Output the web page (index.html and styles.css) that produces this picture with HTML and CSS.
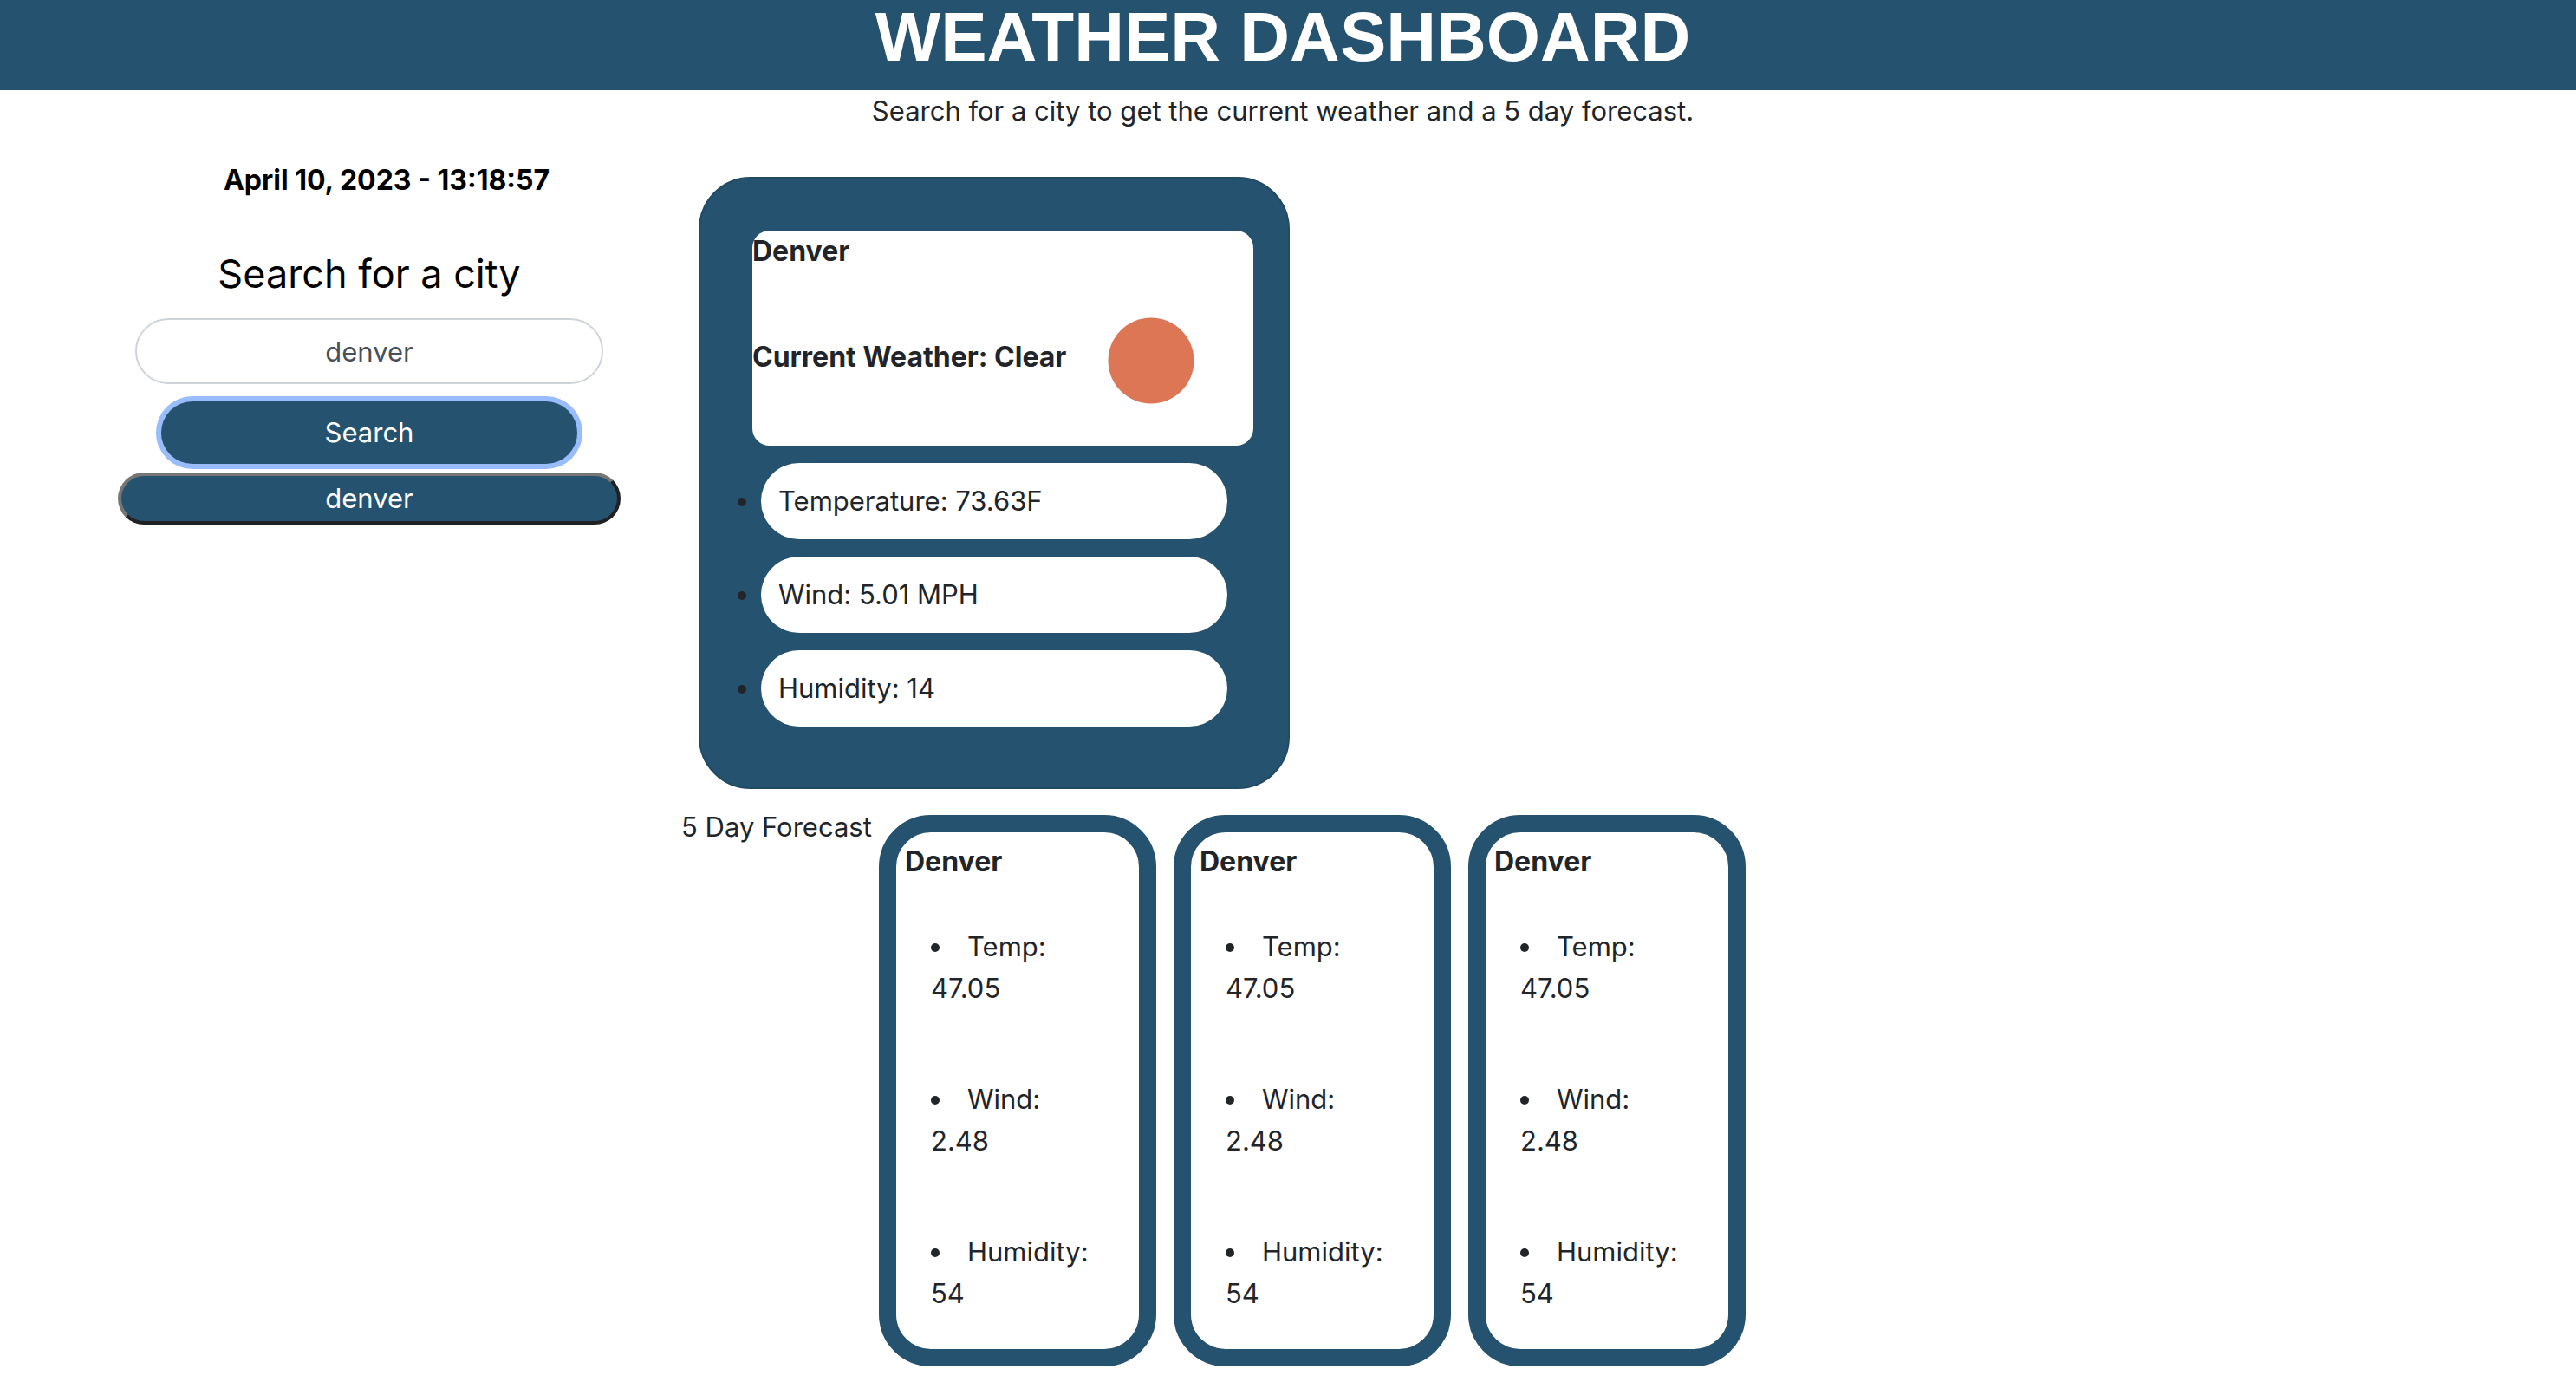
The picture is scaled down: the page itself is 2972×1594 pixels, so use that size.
FILE: index.html
```html
<!DOCTYPE html>
<html lang="en">
<head>
  <meta charset="utf-8">
  <meta name="viewport" content="width=device-width, initial-scale=1">
  <title>Weather Dashboard</title>
  <link rel="stylesheet" href="styles.css">
</head>
<body>
  <header class="page-header">
    <h1 class="page-title">WEATHER DASHBOARD</h1>
  </header>
  <p class="intro">Search for a city to get the current weather and a 5 day forecast.</p>

  <main class="layout">
    <aside class="sidebar">
      <p class="clock">April 10, 2023 - 13:18:57</p>
      <form class="search">
        <label class="search-label" for="city">Search for a city</label>
        <input class="search-input" id="city" type="text" value="denver">
        <button class="search-button" type="button">Search</button>
      </form>
      <button class="history-button" type="button">denver</button>
    </aside>

    <div class="results">
      <section class="current">
        <div class="current-summary">
          <h2 class="city">Denver</h2>
          <div class="conditions">
            <h2 class="city conditions-text">Current Weather: Clear</h2>
            <svg class="sun" viewBox="0 0 100 100" role="img" aria-label="Clear sky"><circle cx="50" cy="50" r="49.5" fill="#dc7655"/></svg>
          </div>
        </div>
        <ul class="current-list">
          <li><span class="pill">Temperature: 73.63F</span></li>
          <li><span class="pill">Wind: 5.01 MPH</span></li>
          <li><span class="pill">Humidity: 14</span></li>
        </ul>
      </section>

      <section class="forecast">
        <p class="forecast-label">5 Day Forecast</p>
        <article class="day">
          <h3 class="city">Denver</h3>
          <ul class="day-list">
            <li>Temp:<br>47.05</li>
            <li>Wind:<br>2.48</li>
            <li>Humidity:<br>54</li>
          </ul>
        </article>
        <article class="day">
          <h3 class="city">Denver</h3>
          <ul class="day-list">
            <li>Temp:<br>47.05</li>
            <li>Wind:<br>2.48</li>
            <li>Humidity:<br>54</li>
          </ul>
        </article>
        <article class="day">
          <h3 class="city">Denver</h3>
          <ul class="day-list">
            <li>Temp:<br>47.05</li>
            <li>Wind:<br>2.48</li>
            <li>Humidity:<br>54</li>
          </ul>
        </article>
      </section>
    </div>
  </main>
</body>
</html>
```
FILE: styles.css
```css
*, *::before, *::after { box-sizing: border-box; }

body {
  margin: 0;
  background: #fff;
  color: #212529;
  font-family: Inter, "Liberation Sans", sans-serif;
  font-size: 31px;
  line-height: 48px;
}

h1, h2, h3, p, ul { margin: 0; padding: 0; }

button, input { font: inherit; text-align: center; }

.page-header {
  padding: 0 12px 18px 0;
  background: #25526e;
}

.page-title {
  color: #fff;
  font-family: "Liberation Sans", Arial, sans-serif;
  font-size: 80px;
  line-height: 86px;
  text-align: center;
}

.intro {
  padding-right: 12px;
  text-align: center;
}

.layout {
  display: grid;
  grid-template-columns: 1fr 3fr;
  padding: 32px 26px 0 66px;
}

.sidebar {
  display: flex;
  flex-direction: column;
  align-items: center;
}

.clock {
  padding-left: 40px;
  color: #000;
  font-size: 32px;
  font-weight: 700;
}

.search {
  display: flex;
  flex-direction: column;
  align-items: center;
  width: 75%;
  margin-top: 56px;
}

.search-label {
  color: #000;
  font-size: 45px;
  line-height: 56px;
}

.search-input {
  width: 100%;
  height: 76px;
  margin-top: 23px;
  border: 2px solid #ced4da;
  border-radius: 40px;
  background: #fff;
  color: #495057;
}

.search-button {
  width: 480px;
  max-width: 100%;
  height: 72px;
  margin-top: 20px;
  border: 0;
  border-radius: 40px;
  background: #25526e;
  color: #fff;
  box-shadow: 0 0 0 6px #99bcfd;
}

.history-button {
  width: 580px;
  max-width: 100%;
  height: 60px;
  margin-top: 10px;
  border: 4px solid;
  border-color: #767676 #212121 #212121 #767676;
  border-radius: 40px;
  background: #25526e;
  color: #fff;
}

.current {
  width: 682px;
  margin: 20px 0 0 20px;
  padding: 60px 40px 70px 60px;
  border: 2px solid #214a63;
  border-radius: 60px;
  background: #25526e;
}

.current-summary {
  padding-bottom: 48px;
  border-radius: 20px;
  background: #fff;
}

.city {
  font-size: 32px;
  font-weight: 700;
  line-height: 48px;
}

.conditions {
  display: flex;
  align-items: center;
  gap: 48px;
  padding-top: 52px;
}

.conditions-text { padding-bottom: 8px; }

.sun {
  width: 100px;
  height: 100px;
}

.current-list {
  display: grid;
  gap: 20px;
  margin-top: 20px;
  padding: 0 30px 0 10px;
}

.pill {
  display: block;
  padding: 20px;
  border-radius: 44px;
  background: #fff;
}

.forecast {
  display: flex;
  align-items: flex-start;
  gap: 20px;
  margin-top: 20px;
}

.forecast-label {
  width: 208px;
  white-space: nowrap;
}

.day {
  width: 320px;
  margin-top: 10px;
  padding: 10px 0 0 10px;
  border: 20px solid #25526e;
  border-radius: 60px;
  background: #fff;
}

.day-list {
  margin-top: 10px;
  list-style-position: inside;
}

.day-list li { padding: 40px 30px; }
```
